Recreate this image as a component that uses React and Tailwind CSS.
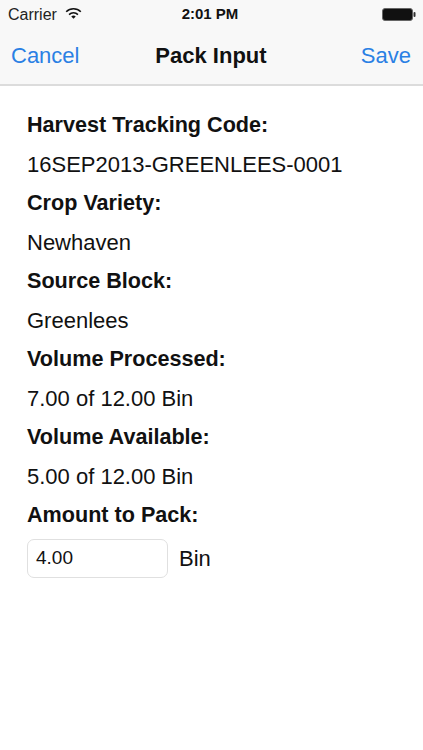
import React from "react";

const rows = [
  ["Harvest Tracking Code:", "16SEP2013-GREENLEES-0001"],
  ["Crop Variety:", "Newhaven"],
  ["Source Block:", "Greenlees"],
  ["Volume Processed:", "7.00 of 12.00 Bin"],
  ["Volume Available:", "5.00 of 12.00 Bin"],
];

const App = () => {
  return (
    <div className="w-[423px] h-[750px] bg-white text-[#111] overflow-hidden font-['Liberation_Sans',sans-serif]">
      <div className="h-[86px] bg-[#f8f8f8] border-b-2 border-[#dcdcdc] flex flex-col">
        <div className="h-[29px] grid grid-cols-3 items-center px-2 text-[16px]">
          <div className="flex items-center gap-[8px]">
            <span className="text-[#222]">Carrier</span>
            <svg className="-mt-[3px]" width="17" height="12" viewBox="0 0 18 13">
              <path d="M0.5 4.5a12 12 0 0 1 17 0l-1.2 1.3a10.2 10.2 0 0 0-14.6 0z" fill="#111" />
              <path d="M3.6 7.6a7.6 7.6 0 0 1 10.8 0l-1.2 1.3a5.8 5.8 0 0 0-8.4 0z" fill="#111" />
              <path d="M6.6 10.4a3.4 3.4 0 0 1 4.8 0L9 12.8z" fill="#111" />
            </svg>
          </div>
          <span className="text-center font-bold text-[15px] pr-[3px] whitespace-nowrap">2:01 PM</span>
          <svg className="justify-self-end -mr-[1px]" width="34" height="13" viewBox="0 0 34 13">
            <rect x="0.5" y="0.5" width="30" height="12" rx="2.5" fill="#111" stroke="#666" />
            <rect x="31.5" y="4" width="2" height="5" rx="1" fill="#333" />
          </svg>
        </div>
        <div className="flex-1 grid grid-cols-3 items-center pl-[11px] pr-[12px] pb-[3px] text-[22px]">
          <span className="text-[#2a80e4] whitespace-nowrap">Cancel</span>
          <span className="font-bold text-center whitespace-nowrap">Pack Input</span>
          <span className="text-[#2a80e4] text-right whitespace-nowrap">Save</span>
        </div>
      </div>
      <div className="pt-[20px] px-[27px] text-[22px]">
        {rows.map(([label, value]) => (
          <div key={label}>
            <div className="h-[39px] flex items-center font-bold text-[21.6px]">{label}</div>
            <div className="h-[39px] flex items-center pb-[1px]">{value}</div>
          </div>
        ))}
        <div className="h-[39px] flex items-center font-bold text-[21.6px]">Amount to Pack:</div>
        <div className="flex items-center gap-[11px] mt-[4px]">
          <div className="w-[141px] h-[39px] border border-[#e0e0e0] rounded-[7px] flex items-center px-2 text-[19px]">4.00</div>
          <span>Bin</span>
        </div>
      </div>
    </div>
  );
};

export default App;
